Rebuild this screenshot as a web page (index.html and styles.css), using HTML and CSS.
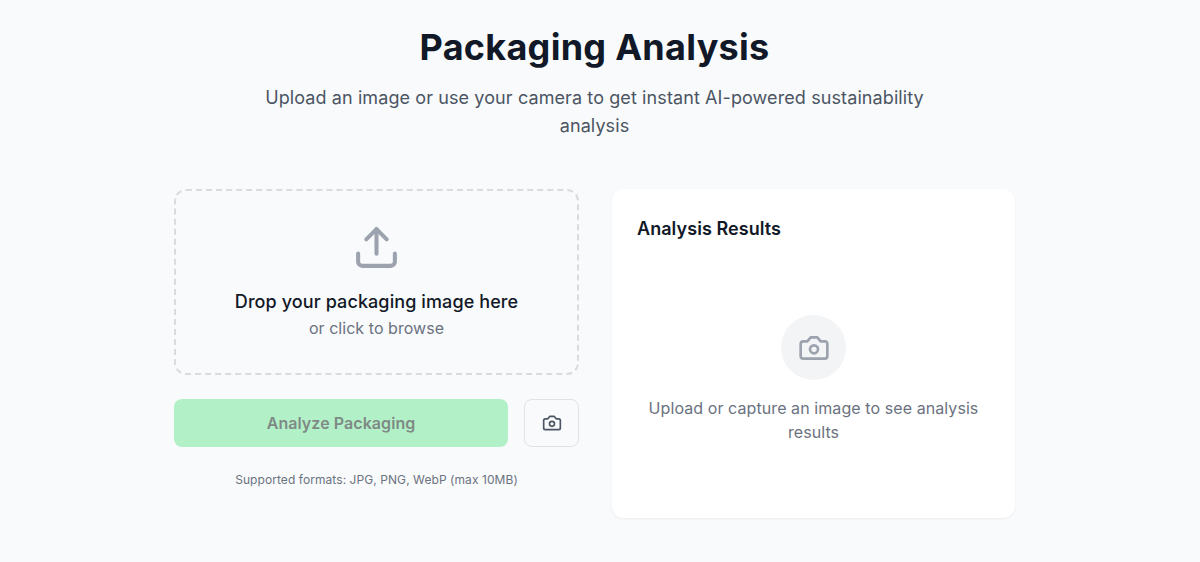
FILE: index.html
```html
<!DOCTYPE html>
<html lang="en">
<head>
  <meta charset="UTF-8">
  <meta name="viewport" content="width=device-width, initial-scale=1.0">
  <title>Packaging Analysis</title>
  <link rel="stylesheet" href="styles.css">
</head>
<body>

  <div class="page-container">
    <div class="page-header">
      <h1>Packaging Analysis</h1>
      <p>Upload an image or use your camera to get instant AI-powered sustainability analysis</p>
    </div>

    <div class="analysis-grid">
      <div class="upload-column">
        <div class="drop-zone">
          <svg class="drop-icon" viewBox="0 0 24 24" fill="none" stroke="currentColor" stroke-width="2" stroke-linecap="round" stroke-linejoin="round">
            <path d="M21 15v4a2 2 0 0 1-2 2H5a2 2 0 0 1-2-2v-4"/>
            <polyline points="17 8 12 3 7 8"/>
            <line x1="12" y1="3" x2="12" y2="15"/>
          </svg>
          <div class="drop-title">Drop your packaging image here</div>
          <div class="drop-sub">or click to browse</div>
        </div>

        <div class="action-row">
          <button class="analyze-button" disabled>Analyze Packaging</button>
          <button class="camera-button">
            <svg class="camera-small" viewBox="0 0 24 24" fill="none" stroke="currentColor" stroke-width="2" stroke-linecap="round" stroke-linejoin="round">
              <path d="M14.5 4h-5L7 7H4a2 2 0 0 0-2 2v9a2 2 0 0 0 2 2h16a2 2 0 0 0 2-2V9a2 2 0 0 0-2-2h-3l-2.5-3z"/>
              <circle cx="12" cy="13" r="3"/>
            </svg>
          </button>
        </div>

        <p class="format-note">Supported formats: JPG, PNG, WebP (max 10MB)</p>
      </div>

      <div class="results-card">
        <h3>Analysis Results</h3>
        <div class="results-empty">
          <div class="empty-circle">
            <svg class="camera-large" viewBox="0 0 24 24" fill="none" stroke="currentColor" stroke-width="2" stroke-linecap="round" stroke-linejoin="round">
              <path d="M14.5 4h-5L7 7H4a2 2 0 0 0-2 2v9a2 2 0 0 0 2 2h16a2 2 0 0 0 2-2V9a2 2 0 0 0-2-2h-3l-2.5-3z"/>
              <circle cx="12" cy="13" r="3"/>
            </svg>
          </div>
          <p>Upload or capture an image to see analysis results</p>
        </div>
      </div>
    </div>
  </div>

</body>
</html>
```

FILE: styles.css
```css
* {
  box-sizing: border-box;
}
body {
  font-family: Inter, "Liberation Sans", sans-serif;
  margin: 0;
  padding-right: 11px;
  background-color: #f9fafb;
  color: #111827;
}
.page-container {
  width: 841px;
  margin: 0 auto;
  padding: 27px 0 24px;
}
.page-header {
  text-align: center;
  margin-bottom: 49px;
}
.page-header h1 {
  margin: 0 0 17px;
  font-size: 36px;
  line-height: 40px;
  font-weight: 700;
  letter-spacing: 0.28px;
}
.page-header p {
  width: 672px;
  margin: 0 auto;
  font-size: 18px;
  line-height: 28px;
  letter-spacing: 0.1px;
  color: #4b5563;
}
.analysis-grid {
  display: grid;
  grid-template-columns: 405px 403px;
  gap: 33px;
}
.drop-zone {
  height: 186px;
  display: flex;
  flex-direction: column;
  align-items: center;
  justify-content: center;
  padding-bottom: 2px;
  border: 2px dashed #d8dbe0;
  border-radius: 12px;
}
.drop-icon {
  width: 49px;
  height: 49px;
  margin-bottom: 16px;
  color: #9ca3af;
}
.drop-title {
  font-size: 18px;
  line-height: 28px;
  font-weight: 500;
  letter-spacing: 0.1px;
}
.drop-sub {
  font-size: 16px;
  line-height: 24px;
  letter-spacing: 0.05px;
  color: #6b7280;
}
.action-row {
  display: flex;
  gap: 16px;
  margin-top: 24px;
}
.analyze-button {
  flex: 1;
  height: 48px;
  border: none;
  border-radius: 8px;
  background-color: #b2f1c8;
  color: #7f8a85;
  font-family: inherit;
  font-size: 16px;
  font-weight: 600;
  letter-spacing: 0.06px;
}
.camera-button {
  width: 55px;
  height: 48px;
  display: flex;
  align-items: center;
  justify-content: center;
  background: none;
  border: 1px solid #e0e2e6;
  border-radius: 8px;
  color: #4b5563;
}
.camera-small {
  width: 20px;
  height: 20px;
}
.format-note {
  margin: 25px 0 0;
  text-align: center;
  font-size: 12px;
  line-height: 16px;
  letter-spacing: 0.07px;
  color: #6b7280;
}
.results-card {
  height: 329px;
  padding: 24px 25px;
  background-color: white;
  border-radius: 12px;
  box-shadow: 0 1px 3px rgba(0, 0, 0, 0.05);
}
.results-card h3 {
  margin: 0;
  font-size: 18px;
  line-height: 32px;
  font-weight: 600;
  letter-spacing: 0.06px;
}
.results-empty {
  margin-top: 70px;
  text-align: center;
}
.empty-circle {
  width: 65px;
  height: 65px;
  margin: 0 auto 16px;
  display: flex;
  align-items: center;
  justify-content: center;
  border-radius: 50%;
  background-color: #f3f4f6;
  color: #9ca3af;
}
.camera-large {
  width: 32px;
  height: 32px;
}
.results-empty p {
  margin: 0;
  font-size: 16px;
  line-height: 24px;
  letter-spacing: 0.08px;
  color: #6b7280;
}
```
